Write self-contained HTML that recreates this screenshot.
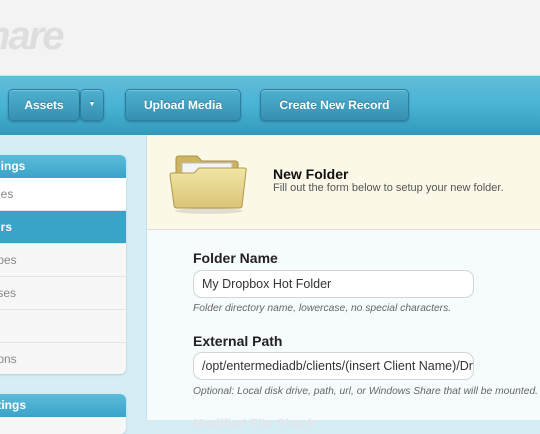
<!DOCTYPE html>
<html><head><style>
*{margin:0;padding:0;box-sizing:border-box}
body{width:540px;height:420px;overflow:hidden;position:relative;font-family:"Liberation Sans",sans-serif;background:#d5edf5}
.hdr{position:absolute;left:0;top:0;width:540px;height:76px;background:#f3f3f3;border-bottom:1px solid #ddd}
.logo{position:absolute;left:-14px;top:14px;font-size:40px;font-weight:bold;font-style:italic;color:#dedede;letter-spacing:-2px}
.nav{position:absolute;left:0;top:76px;width:540px;height:59px;background:linear-gradient(#62bdd9,#49b3d6 50%,#3399bb)}
.btn{position:absolute;top:13px;height:32px;border-radius:5px;background:linear-gradient(#4fb0d0,#3590b2);border:1px solid #2a7ea0;box-shadow:0 1px 2px rgba(0,0,0,.25),inset 0 1px 0 rgba(255,255,255,.25);color:#fff;font-weight:bold;font-size:12px;line-height:30px;text-align:center;text-shadow:0 -1px 0 rgba(0,0,0,.3)}
.side{position:absolute;left:-10px;top:155px;width:136px;height:219px;border-radius:6px;background:#f7f7f7;overflow:hidden;box-shadow:0 1px 2px rgba(0,0,0,.15)}
.sh{height:23px;background:linear-gradient(#5cbcdb,#3aa3c8);color:#fff;font-weight:bold;font-size:12px;line-height:23px;padding-left:4px}
.row{height:33px;border-bottom:1px solid #e3e3e3;font-size:12px;color:#888;line-height:32px;padding-left:4px}
.main{position:absolute;left:146px;top:135px;width:394px;height:285px;background:#f6fbfd;border-left:1px solid #c9dde5}
.mh{height:95px;background:#fbf8e8;border-bottom:1px solid #ddd}
label{position:absolute;left:46px;font-weight:bold;font-size:14px;color:#222}
.in{position:absolute;left:46px;width:281px;height:28px;border:1px solid #d4d4d4;border-radius:9px;background:#fff;font-size:12.5px;color:#333;line-height:26px;padding-left:8px;white-space:nowrap;overflow:hidden}
.help{position:absolute;left:46px;font-size:10.3px;font-style:italic;color:#666;white-space:nowrap}
</style></head><body>
<div class="hdr"><div class="logo">nare</div></div>
<div class="nav">
<div class="btn" style="left:8px;width:72px">Assets</div>
<div class="btn" style="left:80px;width:24px;font-size:7px">▼</div>
<div class="btn" style="left:125px;width:116px">Upload Media</div>
<div class="btn" style="left:260px;width:149px">Create New Record</div>
</div>
<div class="side">
<div class="sh">&nbsp;&nbsp;ings</div>
<div class="row" style="background:#fff">&nbsp;&nbsp;es</div>
<div class="row" style="background:#3aa3c8;color:#fff;font-weight:bold">&nbsp;&nbsp;rs</div>
<div class="row">&nbsp;pes</div>
<div class="row">&nbsp;ses</div>
<div class="row"></div>
<div class="row" style="border:0">&nbsp;ons</div>
</div>
<div class="side" style="top:394px;height:40px"><div class="sh">&nbsp;tings</div></div>
<div class="main">
<div class="mh">
<svg style="position:absolute;left:20px;top:18px" width="82" height="62" viewBox="0 0 82 62">
<defs><linearGradient id="g" x1="0" y1="0" x2="0" y2="1"><stop offset="0" stop-color="#f2e6a6"/><stop offset="1" stop-color="#d9c476"/></linearGradient></defs>
<path d="M9 6 q0-3 3-3 h18 l5 5 h33 q3 0 3 3 v40 h-62z" fill="#cdb563" stroke="#a89140"/>
<rect x="15" y="10" width="50" height="28" fill="#f4f4f4" stroke="#bbb"/>
<path d="M3 22 q0-2 2-2 h22 l5 -5 h45 q3 0 2 3 l-4 35 q0 2-3 2 h-62 q-3 0-3-3z" fill="url(#g)" stroke="#b09a48"/>
<ellipse cx="42" cy="58" rx="34" ry="3" fill="rgba(0,0,0,.1)"/>
</svg>
<div style="position:absolute;left:126px;top:31px;font-size:14px;font-weight:bold;color:#111">New Folder</div>
<div style="position:absolute;left:126px;top:47px;font-size:11px;color:#555">Fill out the form below to setup your new folder.</div>
</div>
<label style="top:115px">Folder Name</label>
<div class="in" style="top:135px">My Dropbox Hot Folder</div>
<div class="help" style="top:168px">Folder directory name, lowercase, no special characters.</div>
<label style="top:198px">External Path</label>
<div class="in" style="top:217px">/opt/entermediadb/clients/(insert Client Name)/Dropbox</div>
<div class="help" style="top:251px">Optional: Local disk drive, path, url, or Windows Share that will be mounted.</div>
<div style="position:absolute;left:46px;top:281px;font-size:13px;font-weight:bold;color:#e2e6e8">Modified File Check</div>
</div>
</body></html>
